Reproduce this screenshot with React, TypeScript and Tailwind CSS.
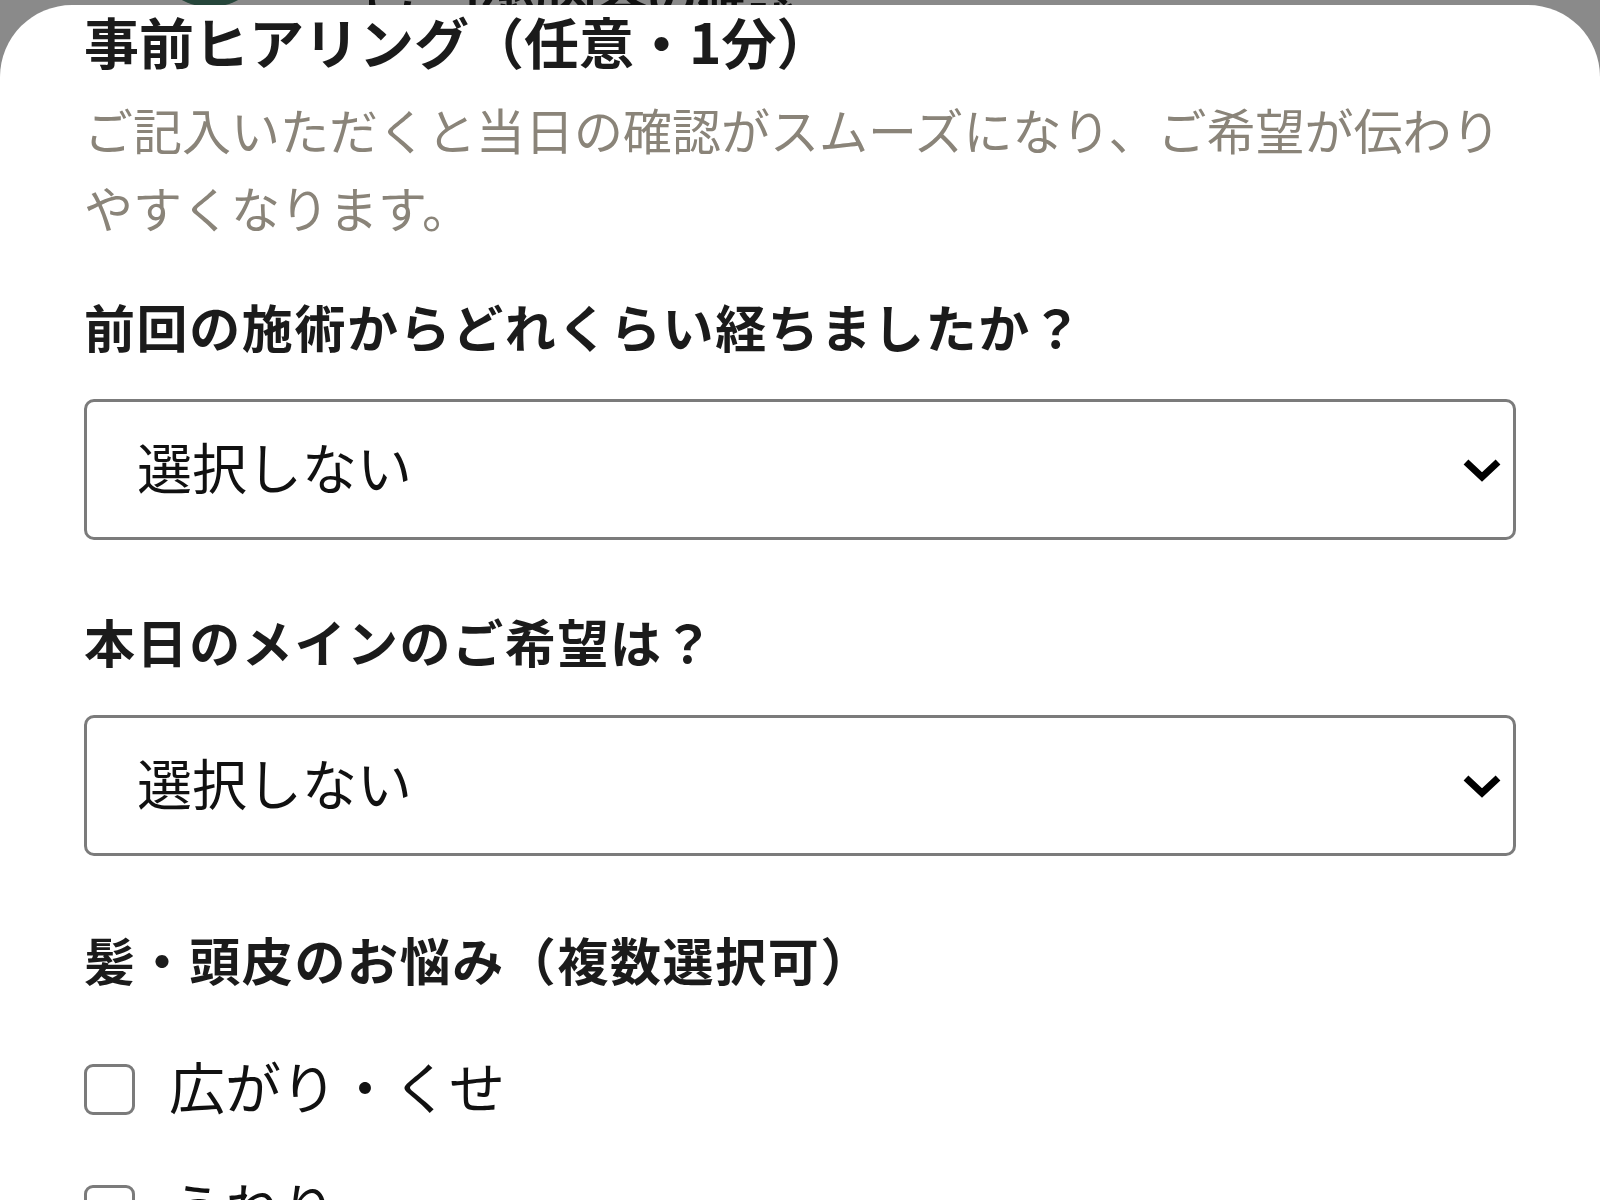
import React from 'react'

const jp = "font-['Noto_Sans_CJK_JP','Noto_Sans',sans-serif]"

const SelectBox = ({ value }: { value: string }) => {
  return (
    <div className="flex h-[141px] w-full items-center justify-between rounded-[10px] border-[3px] border-[#7b7b7b] bg-white pl-[50px] pr-[11px]">
      <span className="pb-[8px] text-[55px] leading-none text-[#111]">{value}</span>
      <svg width="40" height="26" viewBox="0 0 40 26" className="shrink-0">
        <polyline
          points="4,5 20,20 36,5"
          fill="none"
          stroke="#000"
          strokeWidth="7"
          strokeLinejoin="miter"
        />
      </svg>
    </div>
  )
}

const CheckItem = ({ label }: { label: string }) => {
  return (
    <label className="flex h-[72px] items-center gap-[34px]">
      <span className="h-[51px] w-[51px] shrink-0 rounded-[9px] border-[3px] border-[#7b7b7b] bg-white" />
      <span className="pb-[8px] text-[56px] leading-none text-[#111]">{label}</span>
    </label>
  )
}

const labelCls =
  'text-[51px] font-bold leading-[72px] tracking-[1.6px] text-[#1b1b1b]'

export default function App() {
  return (
    <div className={`${jp} flex h-[1200px] w-[1600px] flex-col overflow-hidden bg-[#8a8a8a]`}>
      {/* page behind the sheet, mostly hidden */}
      <div className="flex h-[5px] shrink-0 items-end overflow-hidden">
        <div className="ml-[150px] mb-[-2px] h-[120px] w-[120px] shrink-0 rounded-full bg-[#26463b]" />
        <div className="ml-[66px] mb-[-14px] whitespace-nowrap text-[50px] font-bold leading-none text-[#111]">
          【 ご予約内容の確認
        </div>
      </div>

      <div className="flex flex-1 flex-col rounded-t-[72px] bg-white px-[84px]">
        <h2 className="text-[55px] font-bold leading-[70px] text-[#1b1b1b]">
          事前ヒアリング（任意・1分）
        </h2>
        <p className="mt-[15px] text-[49px] leading-[78px] text-[#8a8479]">
          ご記入いただくと当日の確認がスムーズになり、ご希望が伝わりやすくなります。
        </p>

        <div className={`mt-[44px] ${labelCls}`}>
          前回の施術からどれくらい経ちましたか？
        </div>
        <div className="mt-[37px]">
          <SelectBox value="選択しない" />
        </div>

        <div className={`mt-[65px] ${labelCls}`}>本日のメインのご希望は？</div>
        <div className="mt-[38px]">
          <SelectBox value="選択しない" />
        </div>

        <div className={`mt-[67px] ${labelCls}`}>
          髪・頭皮のお悩み（複数選択可）
        </div>
        <div className="mt-[58px] flex flex-col gap-[49px]">
          <CheckItem label="広がり・くせ" />
          <CheckItem label="うねり" />
          <CheckItem label="パサつき" />
        </div>
      </div>
    </div>
  )
}
